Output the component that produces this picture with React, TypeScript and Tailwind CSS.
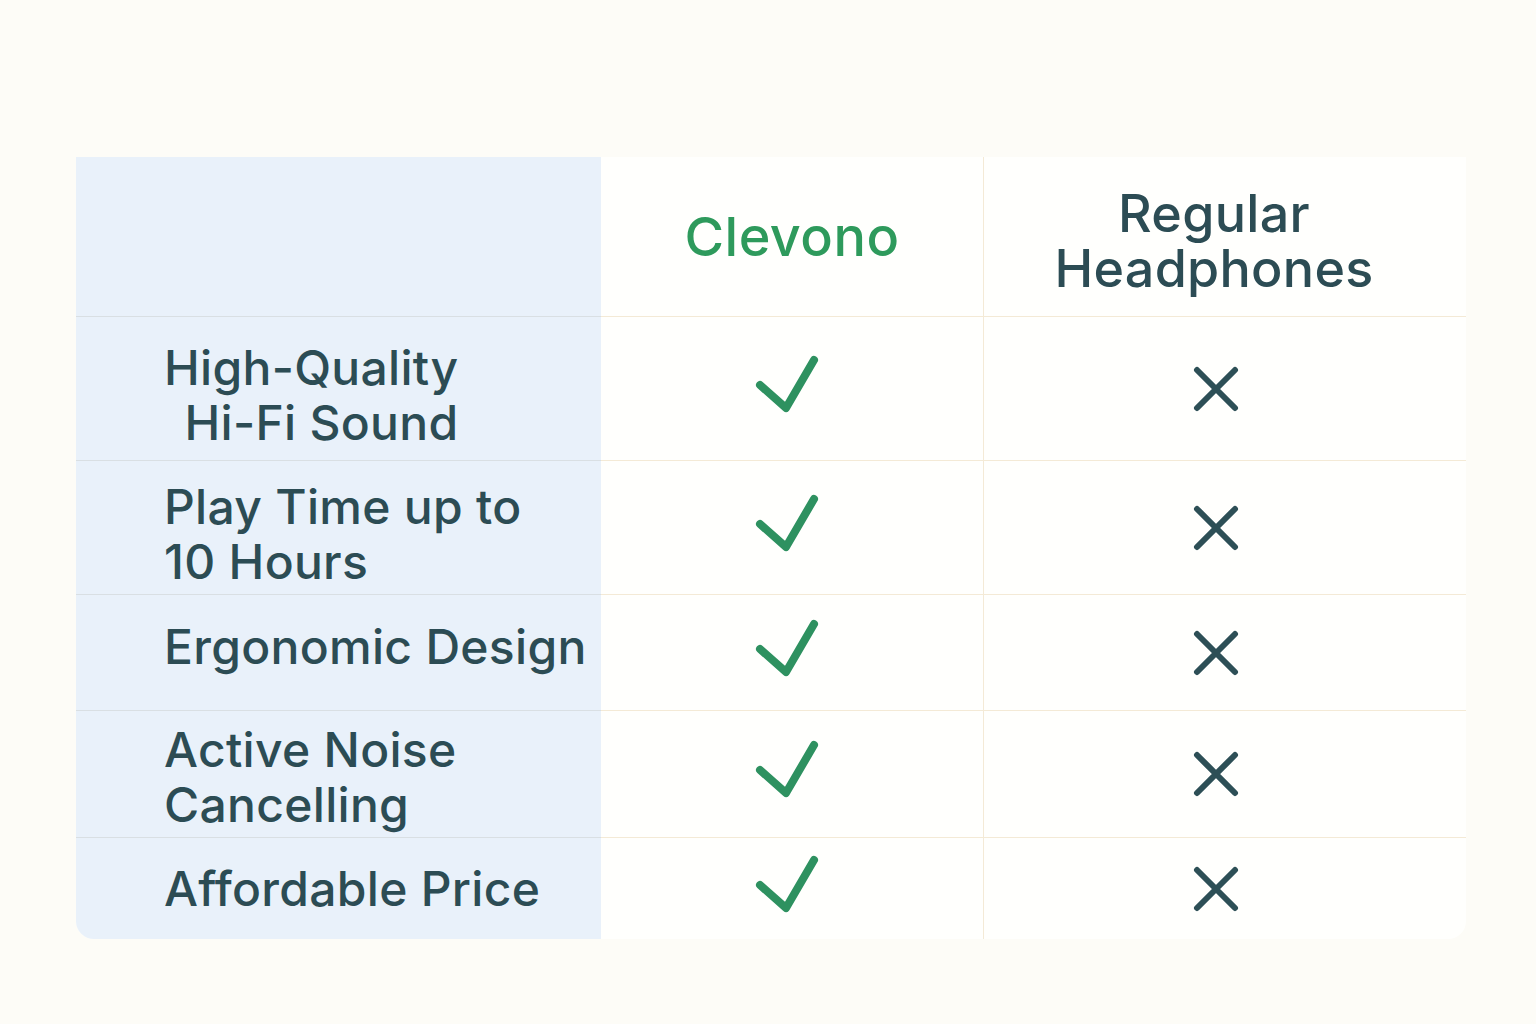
import React from "react";

const rows = [
  { label: ["High-Quality", "Hi-Fi Sound"], h: "h-[144px]", pad: "pt-[12px]", right: true },
  { label: ["Play Time up to", "10 Hours"], h: "h-[134px]", pad: "pt-[12px]" },
  { label: ["Ergonomic Design"], h: "h-[116px]", pad: "pb-[12px]" },
  { label: ["Active Noise", "Cancelling"], h: "h-[127px]", pad: "pt-[6px]" },
  { label: ["Affordable Price"], h: "h-[101px]", pad: "" },
];

function Check() {
  return (
    <svg width="64" height="58" viewBox="0 0 64 58" fill="none">
      <path d="M5 30 L31 53 L59 5" stroke="#2e9160" strokeWidth="8" strokeLinecap="round" strokeLinejoin="round" />
    </svg>
  );
}

function Cross() {
  return (
    <svg width="46" height="46" viewBox="0 0 46 46" fill="none">
      <path d="M4 4 L42 42 M42 4 L4 42" stroke="#2d4f56" strokeWidth="6" strokeLinecap="round" />
    </svg>
  );
}

export default function App() {
  return (
    <div className="min-h-screen w-full bg-[#fdfcf7] pt-[157px] pl-[76px]" style={{ fontFamily: "Inter, 'Noto Sans', sans-serif" }}>
      <div className="w-[1390px] rounded-b-[18px] overflow-hidden bg-[#fffffd] text-[#2c4c54]">
        {/* header */}
        <div className="flex h-[160px]">
          <div className="w-[525px] bg-[#e9f1fa] border-b border-[#d9dfe3]" />
          <div className="w-[382px] flex items-center justify-center border-b border-[#f4ead6]">
            <span className="text-[54px] font-medium text-[#2e9a5c] tracking-[0.5px] leading-none">Clevono</span>
          </div>
          <div className="flex-1 flex items-center justify-center pr-[22px] pt-[8px] border-b border-l border-[#f4ead6]">
            <span className="text-[52px] font-medium text-center leading-[55px] tracking-[0.3px]">
              Regular
              <br />
              Headphones
            </span>
          </div>
        </div>
        {/* rows */}
        {rows.map((r, i) => {
          const last = i === rows.length - 1;
          return (
            <div key={i} className={"flex " + r.h}>
              <div className={"w-[525px] bg-[#e9f1fa] pl-[88px] flex items-center " + r.pad + " " + (last ? "" : "border-b border-[#d9dfe3]")}>
                <div className={"text-[48px] font-medium leading-[55px] tracking-[0.3px] " + (r.right ? "inline-block text-right" : "")}>
                  {r.label.map((l, j) => (
                    <div key={j}>{l}</div>
                  ))}
                </div>
              </div>
              <div className={"w-[382px] flex items-center justify-center pr-[10px] pb-[10px] " + (last ? "" : "border-b border-[#f4ead6]")}>
                <Check />
              </div>
              <div className={"flex-1 flex items-center justify-center pr-[18px] border-l border-[#f4ead6] " + (last ? "" : "border-b")}>
                <Cross />
              </div>
            </div>
          );
        })}
      </div>
    </div>
  );
}
